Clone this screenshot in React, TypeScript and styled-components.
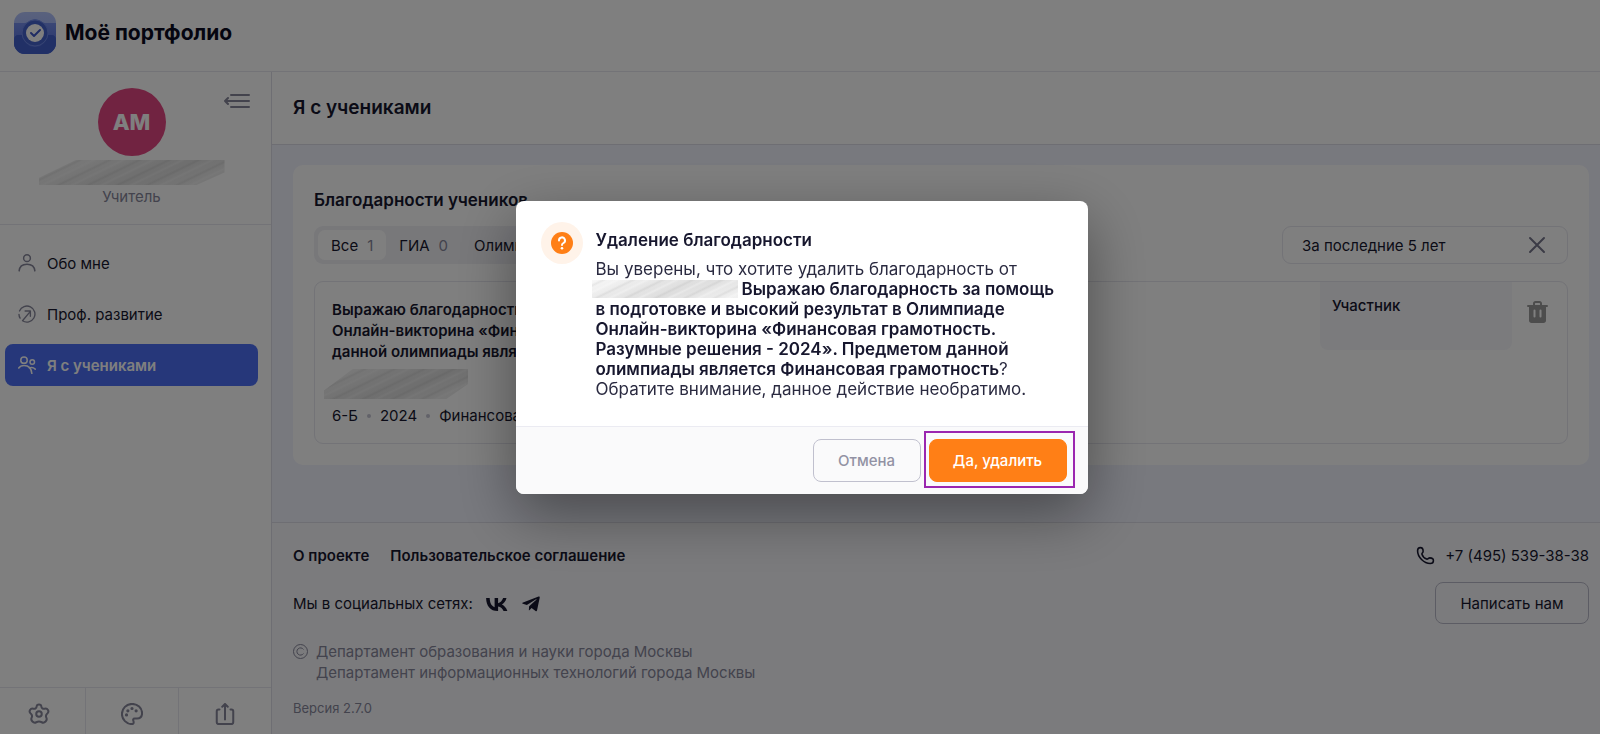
import React from "react";
import styled, { createGlobalStyle, css } from "styled-components";
import { FaTelegramPlane } from "react-icons/fa";

const GlobalStyle = createGlobalStyle`
  * { box-sizing: border-box; }
  body {
    margin: 0;
    background: #f0f2fd;
    color: #17172e;
    font-family: Inter, "Liberation Sans", sans-serif;
    font-size: 15px;
    line-height: 21px;
  }
  button, input { font: inherit; color: inherit; }
  a { color: inherit; text-decoration: none; }
  h1, h2, h3, p { margin: 0; }
`;

const Page = styled.div`
  height: 100vh;
  display: flex;
  flex-direction: column;
  overflow: hidden;
`;

const Header = styled.header`
  display: flex;
  align-items: center;
  gap: 9px;
  height: 72px;
  flex-shrink: 0;
  padding: 0 14px 6px;
  background: #fff;
  border-bottom: 1px solid #e6e6ee;
`;

const Brand = styled.h1`
  font-size: 21px;
  line-height: 28px;
  font-weight: 700;
  color: #0b0b20;
`;

const Body = styled.div`
  flex: 1;
  min-height: 0;
  display: flex;
`;

const Sidebar = styled.aside`
  width: 272px;
  flex-shrink: 0;
  display: flex;
  flex-direction: column;
  background: #fff;
  border-right: 1px solid #dcdce6;
`;

const Profile = styled.section`
  position: relative;
  display: flex;
  flex-direction: column;
  align-items: center;
  padding: 16px 8px 17px 0;
  border-bottom: 1px solid #e6e6ee;
`;

const Avatar = styled.div`
  width: 68px;
  height: 68px;
  margin-bottom: 4px;
  border-radius: 50%;
  display: grid;
  place-items: center;
  background: #e34682;
  color: #fff;
  font-size: 22px;
  font-weight: 800;
`;

const Role = styled.p`
  margin-top: 1px;
  color: #86869a;
`;

const CollapseButton = styled.button`
  position: absolute;
  top: 20px;
  right: 21px;
  padding: 0;
  border: 0;
  background: none;
  color: #86869a;
  line-height: 0;
`;

const Smudge = styled.span<{ $width: number; $height: number; $slant?: boolean }>`
  display: block;
  width: ${(p) => p.$width}px;
  height: ${(p) => p.$height}px;
  background:
    repeating-linear-gradient(154deg, transparent 0 3px, rgba(110, 110, 110, 0.1) 5px, transparent 7px 9px, rgba(255, 255, 255, 0.3) 11px, transparent 13px),
    linear-gradient(160deg, #f8f8f8, #e4e4e4 40%, #dedede 60%, #f2f2f2);
  ${(p) => p.$slant && css`
    clip-path: polygon(20% 0, 100% 0, 100% 50%, 85% 100%, 0 100%, 0 72%);
  `}
`;

const Nav = styled.nav`
  flex: 1;
  display: flex;
  flex-direction: column;
  gap: 9px;
  padding: 17px 13px 0 5px;
`;

const NavLink = styled.a<{ $active?: boolean }>`
  display: flex;
  align-items: center;
  gap: 11px;
  height: 42px;
  padding: 0 13px;
  border-radius: 8px;
  svg { color: #86869a; }
  ${(p) => p.$active && css`
    background: #4c6ff5;
    color: #fff;
    font-weight: 600;
    svg { color: #fff; }
  `}
`;

const SideTools = styled.div`
  display: grid;
  grid-template-columns: 86px 1fr 1fr;
  height: 47px;
  border-top: 1px solid #e6e6ee;
`;

const ToolButton = styled.button`
  display: grid;
  place-items: center;
  padding: 6px 0 0;
  border: 0;
  border-right: 1px solid #e6e6ee;
  background: none;
  color: #86869a;
  &:first-child { padding-right: 7px; }
  &:last-child { border-right: 0; }
`;

const Main = styled.main`
  flex: 1;
  min-width: 0;
  display: flex;
  flex-direction: column;
`;

const TitleBar = styled.div`
  height: 73px;
  flex-shrink: 0;
  padding: 24px 21px;
  background: #fff;
  border-bottom: 1px solid #dcdce6;
`;

const PageTitle = styled.h2`
  font-size: 19px;
  line-height: 24px;
  font-weight: 600;
`;

const Card = styled.section`
  margin: 20px 11px 57px 21px;
  padding: 23px 21px 21px;
  border-radius: 10px;
  background: #fff;
`;

const CardTitle = styled.h3`
  font-size: 17px;
  line-height: 24px;
  font-weight: 600;
`;

const Filters = styled.div`
  display: flex;
  justify-content: space-between;
  margin-top: 14px;
`;

const Tabs = styled.div`
  display: flex;
  height: 38px;
  padding: 4px;
  border-radius: 9px;
  background: #f0f0f5;
`;

const Tab = styled.button<{ $active?: boolean }>`
  display: flex;
  align-items: center;
  gap: 9px;
  padding: 0 13px;
  border: 0;
  border-radius: 7px;
  background: ${(p) => (p.$active ? "#fff" : "none")};
`;

const TabCount = styled.span`
  color: #86869a;
`;

const Period = styled.label`
  display: flex;
  align-items: center;
  width: 286px;
  height: 38px;
  padding: 0 20px 0 19px;
  border: 1px solid #e6e6ee;
  border-radius: 9px;
`;

const PeriodInput = styled.input`
  flex: 1;
  min-width: 0;
  padding: 0;
  border: 0;
  outline: 0;
  background: none;
`;

const ClearButton = styled.button`
  padding: 0;
  border: 0;
  background: none;
  color: #77778c;
  line-height: 0;
`;

const Entry = styled.article`
  display: flex;
  align-items: flex-start;
  margin-top: 17px;
  height: 163px;
  border: 1px solid #e6e6ee;
  border-radius: 9px;
`;

const EntryText = styled.div`
  flex: 1;
  padding: 17px;
`;

const EntryTitle = styled.h4`
  margin: 0;
  font-size: 15px;
  line-height: 21px;
  font-weight: 600;
`;

const EntryPerson = styled.div`
  margin: 7px 0 6px -8px;
`;

const Meta = styled.div`
  display: flex;
  align-items: center;
  gap: 9px;
`;

const MetaDot = styled.span`
  width: 4px;
  height: 4px;
  border-radius: 50%;
  background: #c4c4d2;
`;

const Status = styled.div`
  width: 192px;
  height: 68px;
  padding: 13px 12px;
  border-radius: 0 0 8px 8px;
  background: #f6f6fb;
  font-weight: 500;
`;

const DeleteButton = styled.button`
  margin: 19px 19px 0 15px;
  padding: 0;
  border: 0;
  background: none;
  color: #9b9b9b;
  line-height: 0;
`;

const Footer = styled.footer`
  flex: 1;
  display: flex;
  justify-content: space-between;
  padding: 22px 11px 0 21px;
  border-top: 1px solid #dcdce6;
  background: #f7f7fb;
`;

const FooterLinks = styled.nav`
  display: flex;
  gap: 21px;
  font-weight: 600;
`;

const Social = styled.div`
  display: flex;
  align-items: center;
  gap: 12px;
  margin-top: 27px;
  svg { display: block; }
`;

const Legal = styled.div`
  display: flex;
  gap: 8px;
  margin-top: 27px;
  color: #86869a;
  svg { margin-top: 3px; }
`;

const Version = styled.p`
  margin-top: 16px;
  font-size: 13px;
  line-height: 18px;
  color: #86869a;
`;

const Contacts = styled.div`
  display: flex;
  flex-direction: column;
  align-items: flex-end;
  gap: 16px;
`;

const Phone = styled.a`
  display: flex;
  align-items: center;
  gap: 10px;
`;

const WriteButton = styled.button`
  width: 154px;
  height: 42px;
  border: 1px solid #b9b9c8;
  border-radius: 8px;
  background: none;
`;

const Overlay = styled.div`
  position: fixed;
  inset: 0;
  display: flex;
  align-items: center;
  justify-content: center;
  padding: 0 0 39px 3px;
  background: rgba(0, 0, 0, 0.5);
`;

const Dialog = styled.section`
  width: 572px;
  border-radius: 8px;
  overflow: hidden;
  background: #fff;
  box-shadow: 0 20px 60px rgba(0, 0, 0, 0.4);
`;

const DialogBody = styled.div`
  display: flex;
  align-items: flex-start;
  gap: 13px;
  padding: 21px 25px 27px;
`;

const QuestionBadge = styled.div`
  width: 42px;
  height: 42px;
  flex-shrink: 0;
  display: grid;
  place-items: center;
  border-radius: 50%;
  background: #fff3e9;
`;

const DialogText = styled.div`
  padding-top: 6px;
  font-size: 17px;
  line-height: 20px;
  color: #2a2a40;
  b { font-weight: 600; color: #17172e; }
`;

const DialogTitle = styled.h2`
  margin-bottom: 7px;
  font-size: 17px;
  line-height: 24px;
  font-weight: 600;
  color: #17172e;
`;

const HiddenName = styled.span`
  display: inline-block;
  vertical-align: top;
  margin: 1px 4px 0 -4px;
`;

const DialogFooter = styled.div`
  display: flex;
  justify-content: flex-end;
  gap: 8px;
  padding: 12px 21px;
  border-top: 1px solid #ebebf2;
  background: #fafafb;
`;

const DialogButton = styled.button<{ $primary?: boolean }>`
  position: relative;
  width: ${(p) => (p.$primary ? 138 : 108)}px;
  height: 43px;
  border: 1px solid ${(p) => (p.$primary ? "#ff7f16" : "#c0c0ce")};
  border-radius: 8px;
  background: ${(p) => (p.$primary ? "#ff7f16" : "#fafafb")};
  color: ${(p) => (p.$primary ? "#fff" : "#9292a4")};
  font-weight: 500;
`;

const Highlight = styled.span`
  position: absolute;
  inset: -9px -9px -7px -6px;
  border: 2px solid #9b27b0;
  pointer-events: none;
`;

type IconProps = { size?: number; children: React.ReactNode; width?: number };

const Icon = ({ size = 18, width = 2, children }: IconProps) => (
  <svg width={size} height={size} viewBox="0 0 24 24" fill="none" stroke="currentColor"
    strokeWidth={width} strokeLinecap="round" strokeLinejoin="round" aria-hidden="true">
    {children}
  </svg>
);

const Logo = () => (
  <svg width="42" height="42" viewBox="0 0 42 42" aria-hidden="true">
    <defs>
      <linearGradient id="logoBase" x1="0" y1="0" x2="0" y2="1">
        <stop offset="0" stopColor="#b3c3fb" />
        <stop offset="1" stopColor="#8ea5f3" />
      </linearGradient>
      <linearGradient id="logoMid" x1="0" y1="0" x2="0" y2="1">
        <stop offset="0" stopColor="#7b93ee" />
        <stop offset="1" stopColor="#4a66d6" />
      </linearGradient>
      <clipPath id="logoClip"><rect width="42" height="42" rx="11" /></clipPath>
    </defs>
    <g clipPath="url(#logoClip)">
      <rect width="42" height="42" fill="url(#logoBase)" />
      <path d="M0 11h11c4 0 5-4 10-4s6 4 10 4h11v31H0z" fill="url(#logoMid)" />
      <path d="M0 27c0-2 2-4 4-4h5a12 12 0 0 0 24 0h5c2 0 4 2 4 4v15H0z" fill="#4260cd" />
      <circle cx="21" cy="21" r="13" fill="#4562cd" stroke="#6f89e6" />
      <circle cx="21" cy="21" r="9" fill="#fff" />
      <path d="m17 21 3 3 6-6" fill="none" stroke="#4059c8" strokeWidth="2" strokeLinecap="round" strokeLinejoin="round" />
    </g>
  </svg>
);

const App = () => (
  <>
    <GlobalStyle />
    <Page>
      <Header>
        <Logo />
        <Brand>Моё портфолио</Brand>
      </Header>
      <Body>
        <Sidebar>
          <Profile>
            <Avatar>АМ</Avatar>
            <CollapseButton aria-label="Свернуть меню">
              <svg width="26" height="18" viewBox="0 0 26 18" fill="none" stroke="currentColor" strokeWidth="2" strokeLinecap="round" strokeLinejoin="round">
                <path d="M7 3h18M1 9h24M7 15h18M4 6 1 9l3 3" />
              </svg>
            </CollapseButton>
            <Smudge $width={186} $height={25} $slant />
            <Role>Учитель</Role>
          </Profile>
          <Nav>
            <NavLink href="#about">
              <Icon><circle cx="12" cy="5.500" r="4.500" /><path d="M1.500 22.500c.5-6 4.500-9 10.500-9s10 3 10.500 9" /></Icon>
              Обо мне
            </NavLink>
            <NavLink href="#growth">
              <Icon width={1.800}><path d="M2 8A10.700 10.700 0 1 1 6 21L16.500 8.500M9.500 8h7v7M1.300 12.500a10 10 0 0 0 1.500 5" /></Icon>
              Проф. развитие
            </NavLink>
            <NavLink href="#students" $active>
              <Icon>
                <circle cx="8" cy="5.500" r="4.300" /><circle cx="19" cy="8" r="3" />
                <path d="M1 16c1.500-2.500 4-3.500 7-3.500 6 0 10 4 10.500 11M15 16c3-1.500 6-.5 8 1.500" />
              </Icon>
              Я с учениками
            </NavLink>
          </Nav>
          <SideTools>
            <ToolButton aria-label="Настройки">
              <Icon size={22} width={2.200}>
                <circle cx="12" cy="12" r="3" />
                <path d="M9.500 3.500C9.700 1 14.300 1 14.500 3.500c.2 2.300 1.800 3.300 3.800 2.700 3-.9 5.200 3 3 5-1.800 1.500-2.300 2.800-1.300 4.800 1.500 3-2 6.600-5 5-2-1-4-1-6 0-3 1.600-6.500-2-5-5 1-2 .5-3.300-1.300-4.800-2.200-2 0-5.900 3-5 2 .6 3.600-.4 3.800-2.700z" />
              </Icon>
            </ToolButton>
            <ToolButton aria-label="Оформление">
              <Icon size={22} width={2.200}>
                <path d="M12 23C6 23 1 18 1 12S6 1 12 1s11 4.500 11 10c0 4-2.500 6-5.500 6H15c-2 0-2 1.200-1.500 2.500.7 1.800.3 3.500-1.500 3.500z" />
                <path d="M6 13h.01M7.500 8.500h.01M12 6h.01M16.500 8.500h.01" strokeWidth="3.500" />
              </Icon>
            </ToolButton>
            <ToolButton aria-label="Поделиться">
              <Icon size={22} width={2.200}><path d="M6 7H5c-1.500 0-2 .5-2 2v12c0 1.500.5 2 2 2h14c1.500 0 2-.5 2-2V9c0-1.500-.5-2-2-2h-1M12 18V2M9 4l3-3 3 3" /></Icon>
            </ToolButton>
          </SideTools>
        </Sidebar>
        <Main>
          <TitleBar><PageTitle>Я с учениками</PageTitle></TitleBar>
          <Card>
            <CardTitle>Благодарности учеников</CardTitle>
            <Filters>
              <Tabs>
                <Tab $active>Все <TabCount>1</TabCount></Tab>
                <Tab>ГИА <TabCount>0</TabCount></Tab>
                <Tab>Олимпиады <TabCount>1</TabCount></Tab>
              </Tabs>
              <Period>
                <PeriodInput aria-label="Период" defaultValue="За последние 5 лет" />
                <ClearButton aria-label="Очистить">
                  <svg width="20" height="20" viewBox="0 0 20 20" fill="none" stroke="currentColor" strokeWidth="2" strokeLinecap="round"><path d="m3 3 14 14M17 3 3 17" /></svg>
                </ClearButton>
              </Period>
            </Filters>
            <Entry>
              <EntryText>
                <EntryTitle>
                  Выражаю благодарность<br />
                  Онлайн-викторина «Финансовая<br />
                  данной олимпиады является
                </EntryTitle>
                <EntryPerson><Smudge $width={144} $height={30} $slant /></EntryPerson>
                <Meta>
                  6-Б<MetaDot />2024<MetaDot />Финансовая грамотность
                </Meta>
              </EntryText>
              <Status>Участник</Status>
              <DeleteButton aria-label="Удалить">
                <svg width="21" height="22" viewBox="0 0 21 22" fill="currentColor">
                  <path fillRule="evenodd" d="M6 4V2.500C6 1 7 0 8.500 0h4C14 0 15 1 15 2.500V4h5a1 1 0 0 1 0 2h-1v13.500c0 1.500-1 2.500-2.500 2.500h-12C3 22 2 21 2 19.500V6H1a1 1 0 0 1 0-2zm2 0h5V2.500c0-.3-.2-.5-.5-.5h-4c-.3 0-.5.2-.5.500zM6.500 9.500v6a1 1 0 0 0 2 0v-6a1 1 0 0 0-2 0zm6 0v6a1 1 0 0 0 2 0v-6a1 1 0 0 0-2 0z" />
                </svg>
              </DeleteButton>
            </Entry>
          </Card>
          <Footer>
            <div>
              <FooterLinks>
                <a href="#project">О проекте</a>
                <a href="#agreement">Пользовательское соглашение</a>
              </FooterLinks>
              <Social>
                Мы в социальных сетях:
                <a href="#vk" aria-label="ВКонтакте">
                  <svg width="24" height="20" viewBox="1 3 22 18" fill="currentColor">
                    <path d="M12.500 18.500C6 18.500 2.200 14 2 6.500h3.300c.1 5.500 2.600 7.900 4.500 8.400V6.500H13v4.700c1.900-.2 3.900-2.400 4.600-4.700h3.100c-.5 2.900-2.700 5.100-4.200 6 1.500.7 4 2.600 5 6h-3.500c-.7-2.200-2.600-4-5-4.200v4.200z" />
                  </svg>
                </a>
                <a href="#telegram" aria-label="Telegram"><FaTelegramPlane size={20} /></a>
              </Social>
              <Legal>
                <svg width="15" height="15" viewBox="0 0 15 15" fill="none" stroke="currentColor" aria-hidden="true">
                  <circle cx="7.500" cy="7.500" r="7" /><path d="M10.500 5.500a3.600 3.600 0 1 0 0 4" />
                </svg>
                <p>Департамент образования и науки города Москвы<br />Департамент информационных технологий города Москвы</p>
              </Legal>
              <Version>Версия 2.7.0</Version>
            </div>
            <Contacts>
              <Phone href="tel:+74955393838">
                <Icon size={19}>
                  <path d="M2 6c0-3 1-4 3.500-4C8 2 9 4 9 6.500S7 9 7.500 10.500c.8 2.500 3.500 5.200 6 6 1.500.5 2-1.500 4-1.500 2.500 0 4.500 1.500 4.500 3.500 0 2.500-1.500 3.500-4 3.500C10 22 2 14 2 6z" />
                </Icon>
                +7 (495) 539-38-38
              </Phone>
              <WriteButton>Написать нам</WriteButton>
            </Contacts>
          </Footer>
        </Main>
      </Body>
    </Page>
    <Overlay>
      <Dialog role="dialog" aria-modal="true" aria-labelledby="dialog-title">
        <DialogBody>
          <QuestionBadge>
            <svg width="22" height="22" viewBox="0 0 22 22" fill="none" aria-hidden="true">
              <circle cx="11" cy="11" r="11" fill="#ff7f16" />
              <path d="M8 8.500a3 3 0 1 1 4.500 2.500c-1 .600-1.500 1-1.500 2" stroke="#fff" strokeWidth="2" strokeLinecap="round" />
              <circle cx="11" cy="16.300" r="1.300" fill="#fff" />
            </svg>
          </QuestionBadge>
          <DialogText>
            <DialogTitle id="dialog-title">Удаление благодарности</DialogTitle>
            <p>
              Вы уверены, что хотите удалить благодарность от<br />
              <HiddenName><Smudge $width={146} $height={18} /></HiddenName>
              <b>
                Выражаю благодарность за помощь<br />
                в подготовке и высокий результат в Олимпиаде<br />
                Онлайн-викторина «Финансовая грамотность.<br />
                Разумные решения - 2024». Предметом данной<br />
                олимпиады является Финансовая грамотность
              </b>?<br />
              Обратите внимание, данное действие необратимо.
            </p>
          </DialogText>
        </DialogBody>
        <DialogFooter>
          <DialogButton>Отмена</DialogButton>
          <DialogButton $primary>Да, удалить<Highlight /></DialogButton>
        </DialogFooter>
      </Dialog>
    </Overlay>
  </>
);

export default App;
